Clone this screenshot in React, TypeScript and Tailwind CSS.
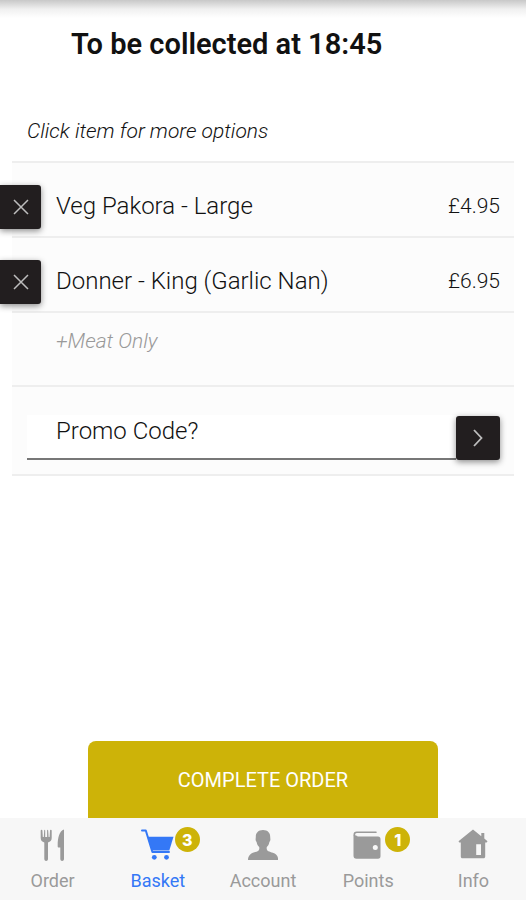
import type { ReactNode } from "react";

type Item = { name: string; price: string; note?: string };

const items: Item[] = [
  { name: "Veg Pakora - Large", price: "£4.95" },
  { name: "Donner - King (Garlic Nan)", price: "£6.95", note: "+Meat Only" },
];

function ForkKnifeIcon() {
  return (
    <svg width="26" height="32" viewBox="0 0 26 32" fill="currentColor" aria-hidden="true">
      <path d="M.7 1.5C.8.5 2.3.5 2.4 1.5L2.8 8h1L4.2 1.500C4.300.5 5 .5 5.200 1.500V8h1.900V1.500C7.300.5 8 .5 8.200 1.500L8.600 8h1L10 1.500c.1-1 1.600-1 1.700 0V9c0 2.600-1.500 3.800-3.700 4.400V30c0 2.600-3.700 2.600-3.700 0V13.400C2.100 12.800.7 11.600.7 9z" />
      <path d="M24 .5V30c0 2.600-3.700 2.600-3.700 0V18.500h-1.500c-.7 0-1.100-.3-1.100-1C17.500 10 19 2 24 .5z" />
    </svg>
  );
}

function CartIcon() {
  return (
    <svg width="34" height="32" viewBox="0 0 34 32" fill="currentColor" aria-hidden="true">
      <path d="M1 1.500h3.800L11.400 23H28" fill="none" stroke="currentColor" strokeWidth="2" strokeLinecap="round" strokeLinejoin="round" />
      <path d="M6.500 7.800H32.500L28.300 21.500H11z" />
      <circle cx="13.300" cy="28.300" r="2.400" />
      <circle cx="25.500" cy="28.300" r="2.400" />
    </svg>
  );
}

function PersonIcon() {
  return (
    <svg width="30" height="32" viewBox="0 0 30 32" fill="currentColor" aria-hidden="true">
      <path d="M15 1c4.800 0 7.300 3 7.200 7 0 1 .2 1.500.2 2.500 0 1.300-.6 2-1 2.400-.4 2.200-1.200 3.800-2.600 5-.3 1.600-.2 3 .8 3.800 1.700 1.300 6.400 1.900 8.400 3.700 1.600 1.400 2.200 3.300 2.200 5.600H0c0-2.300.6-4.200 2.200-5.600 2-1.800 6.500-2.400 8.200-3.700 1-.8 1.100-2.200.8-3.800-1.400-1.200-2.200-2.800-2.600-5-.4-.4-1-1.100-1-2.400 0-1 .2-1.500.2-2.500C7.700 4 10.200 1 15 1z" />
    </svg>
  );
}

function WalletIcon() {
  return (
    <svg width="30" height="32" viewBox="0 0 30 32" fill="currentColor" aria-hidden="true">
      <path d="M23 3.200H3.700C2 3.200 1.300 4.300 1.300 5.500S2.200 7.600 3.700 7.600" fill="none" stroke="currentColor" strokeWidth="1.600" strokeLinecap="round" />
      <path d="M.5 5.500C1 7 2 7.600 3.700 7.600H25c1.700 0 2.500.9 2.500 2.400v17.300c0 1.500-.8 2.400-2.500 2.400H3.500c-2 0-3-1-3-3z" />
      <circle cx="22.300" cy="18.600" r="2.500" fill="#f7f7f7" />
    </svg>
  );
}

function HouseIcon() {
  return (
    <svg width="30" height="32" viewBox="0 0 30 32" fill="currentColor" aria-hidden="true">
      <path fillRule="evenodd" d="M15 .6l8.300 6.600V4h3v5.600l3.200 2.600-.8 1.200h-1.500V27.500c0 1.200-.6 1.800-1.800 1.800H4.600c-1.200 0-1.800-.6-1.800-1.800V13.400H1.300l-.8-1.200zM18.200 15.300V26H23V15.300z" />
    </svg>
  );
}

function Tab({ label, icon, badge, active }: { label: string; icon: ReactNode; badge?: number; active?: boolean }) {
  return (
    <a
      href="#"
      aria-current={active ? "page" : undefined}
      className={`relative flex flex-1 flex-col items-center gap-2 pt-[11px] pb-[7px] ${active ? "text-[#3478f6]" : "text-[#9a9a9a]"}`}
    >
      {icon}
      <span className="text-lg leading-6">{label}</span>
      {badge !== undefined && (
        <span className="absolute top-[9px] left-1/2 ml-[17px] flex size-[25px] items-center justify-center rounded-full bg-[#cdb308] font-['Inter',sans-serif] text-base leading-none font-extrabold text-white">
          {badge}
        </span>
      )}
    </a>
  );
}

const darkButton = "flex h-11 shrink-0 items-center justify-center bg-[#221e1f] text-[#bdbdbd] shadow-[0_2px_6px_rgba(0,0,0,0.45)]";

export default function App() {
  return (
    <div className="flex min-h-screen flex-col bg-white font-['Roboto',sans-serif] text-[#111]">
      <div className="h-[18px] bg-linear-to-b from-[#c8c8c8] via-[#f0f0f0] to-white" />
      <main className="flex flex-1 flex-col">
        <h1 className="pt-2 pr-4 pl-[71px] text-[29px] leading-9 font-semibold text-[#111]">To be collected at 18:45</h1>

        <section className="mx-3 mt-[37px]">
          <p className="border-b-2 border-[#eee] pt-5 pr-3.5 pb-[18px] pl-[15px] text-[21px] leading-6 font-light italic">Click item for more options</p>
          <ul>
            {items.map((item) => (
              <li key={item.name} className="bg-[#fcfcfc]">
                <div className="flex h-[75px] items-center border-b-2 border-[#eee] pt-3.5 pr-3.5">
                  <button type="button" aria-label={`Remove ${item.name}`} className={`${darkButton} -ml-3 w-[41px] rounded-r-[3px]`}>
                    <svg width="16" height="16" viewBox="0 0 16 16" fill="none" stroke="currentColor" strokeWidth="1.500" aria-hidden="true">
                      <path d="M1 1l14 14M15 1L1 15" />
                    </svg>
                  </button>
                  <span className="flex-1 pb-0.5 pl-[15px] text-2xl font-light">{item.name}</span>
                  <span className="text-[21px] font-light">{item.price}</span>
                </div>
                {item.note && (
                  <p className="h-[74px] border-b-2 border-[#eee] pt-3.5 pl-11 text-[21px] leading-7 font-light text-[#999] italic">{item.note}</p>
                )}
              </li>
            ))}
          </ul>
          <form className="flex items-end border-b-2 border-[#eee] bg-[#fcfcfc] pt-7 pr-3.5 pb-3.5 pl-[15px]" onSubmit={(e) => e.preventDefault()}>
            <label htmlFor="promo" className="sr-only">Promo Code?</label>
            <input
              id="promo"
              type="text"
              placeholder="Promo Code?"
              className="h-[45px] min-w-0 flex-1 border-b-2 border-[#777] bg-white pb-3 pl-[29px] text-2xl leading-7 font-light outline-none placeholder:text-[#111]"
            />
            <button type="submit" aria-label="Apply promo code" className={`${darkButton} w-11 rounded-[3px]`}>
              <svg width="10" height="18" viewBox="0 0 10 18" fill="none" stroke="currentColor" strokeWidth="1.800" aria-hidden="true">
                <path d="M1 1l7.500 8L1 17" />
              </svg>
            </button>
          </form>
        </section>

        <button type="button" className="mx-auto mt-auto h-[77px] w-2/3 rounded-t-lg bg-[#cdb308] text-xl text-white">
          COMPLETE ORDER
        </button>
      </main>
      <nav className="flex bg-[#f7f7f7]">
        <Tab label="Order" icon={<ForkKnifeIcon />} />
        <Tab label="Basket" icon={<CartIcon />} badge={3} active />
        <Tab label="Account" icon={<PersonIcon />} />
        <Tab label="Points" icon={<WalletIcon />} badge={1} />
        <Tab label="Info" icon={<HouseIcon />} />
      </nav>
    </div>
  );
}
